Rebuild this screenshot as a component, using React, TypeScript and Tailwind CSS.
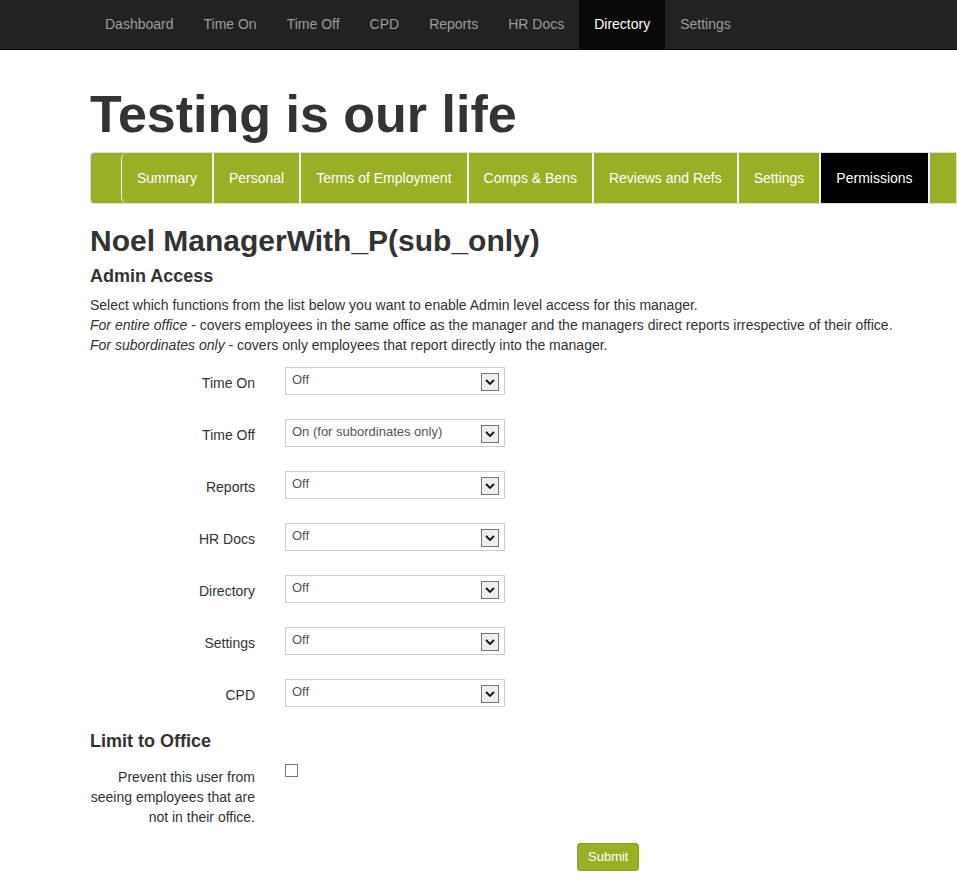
const topNav = ['Dashboard', 'Time On', 'Time Off', 'CPD', 'Reports', 'HR Docs', 'Directory', 'Settings']
const tabs = ['Summary', 'Personal', 'Terms of Employment', 'Comps & Bens', 'Reviews and Refs', 'Settings', 'Permissions']
const fields: [string, string][] = [
  ['Time On', 'Off'],
  ['Time Off', 'On (for subordinates only)'],
  ['Reports', 'Off'],
  ['HR Docs', 'Off'],
  ['Directory', 'Off'],
  ['Settings', 'Off'],
  ['CPD', 'Off'],
]

const SelectBox = ({ value }: { value: string }) => (
  <div className="w-[220px] h-[28px] border border-[#ccc] bg-white flex items-start justify-between pl-[6px] pr-[5px] pt-[4px] text-[13px] text-[#555]">
    <span className="leading-[16px]">{value}</span>
    <span className="w-[18px] h-[18px] mt-[1px] border border-[#777] bg-[#eee] flex items-center justify-center">
      <svg width="10" height="6" viewBox="0 0 10 6">
        <path d="M1 1 L5 5 L9 1" stroke="#111" strokeWidth="1.8" fill="none" />
      </svg>
    </span>
  </div>
)

export default function App() {
  return (
    <div className="min-h-screen bg-white text-[#333] font-['Liberation_Sans',Arial,sans-serif] text-[14px]">
      <nav className="h-[50px] bg-[#222] border-b border-[#080808] pl-[90px] flex">
        {topNav.map((item) => (
          <a
            key={item}
            className={`px-[15px] flex items-center text-[14px] ${item === 'Directory' ? 'bg-[#080808] text-white' : 'text-[#9d9d9d]'}`}
          >
            {item}
          </a>
        ))}
      </nav>

      <div className="pl-[90px]">
        <h1 className="text-[52px] font-bold leading-[1] pt-[38px] pb-[12px]">Testing is our life</h1>

        <div className="h-[52px] bg-[#9aaf26] border border-[#ddd] rounded-l-[4px] flex pl-[30px]">
          {tabs.map((tab, i) => (
            <div
              key={tab}
              className={`px-[15px] flex items-center text-[14px] text-white border-r-2 border-[#f2f2f2] ${i === 0 ? 'border-l rounded-l-[6px]' : ''} ${tab === 'Permissions' ? 'bg-black' : ''}`}
            >
              {tab}
            </div>
          ))}
        </div>

        <h2 className="text-[30px] font-bold leading-[1] mt-[22px]">Noel ManagerWith_P(sub_only)</h2>
        <h3 className="text-[18px] font-bold leading-[1] mt-[11px]">Admin Access</h3>
        <div className="mt-[10px] leading-[20px]">
          <p>Select which functions from the list below you want to enable Admin level access for this manager.</p>
          <p><i>For entire office</i> - covers employees in the same office as the manager and the managers direct reports irrespective of their office.</p>
          <p><i>For subordinates only</i> - covers only employees that report directly into the manager.</p>
        </div>

        <div className="mt-[12px] flex flex-col gap-[24px]">
          {fields.map(([label, value]) => (
            <div key={label} className="flex items-start">
              <label className="w-[165px] text-right pt-[6px] leading-[20px]">{label}</label>
              <div className="ml-[30px]">
                <SelectBox value={value} />
              </div>
            </div>
          ))}
        </div>

        <h3 className="text-[18px] font-bold leading-[1] mt-[25px]">Limit to Office</h3>
        <div className="flex items-start mt-[14px]">
          <label className="w-[165px] text-right leading-[20px] mt-[3px]">
            Prevent this user from seeing employees that are not in their office.
          </label>
          <div className="ml-[30px] w-[13px] h-[13px] border border-[#777] bg-white" />
        </div>

        <div className="mt-[16px] pl-[487px]">
          <button className="h-[28px] px-[10px] rounded-[3px] bg-[#9aaf26] border border-[#8a9d20] text-white text-[13px]">
            Submit
          </button>
        </div>
      </div>
    </div>
  )
}
